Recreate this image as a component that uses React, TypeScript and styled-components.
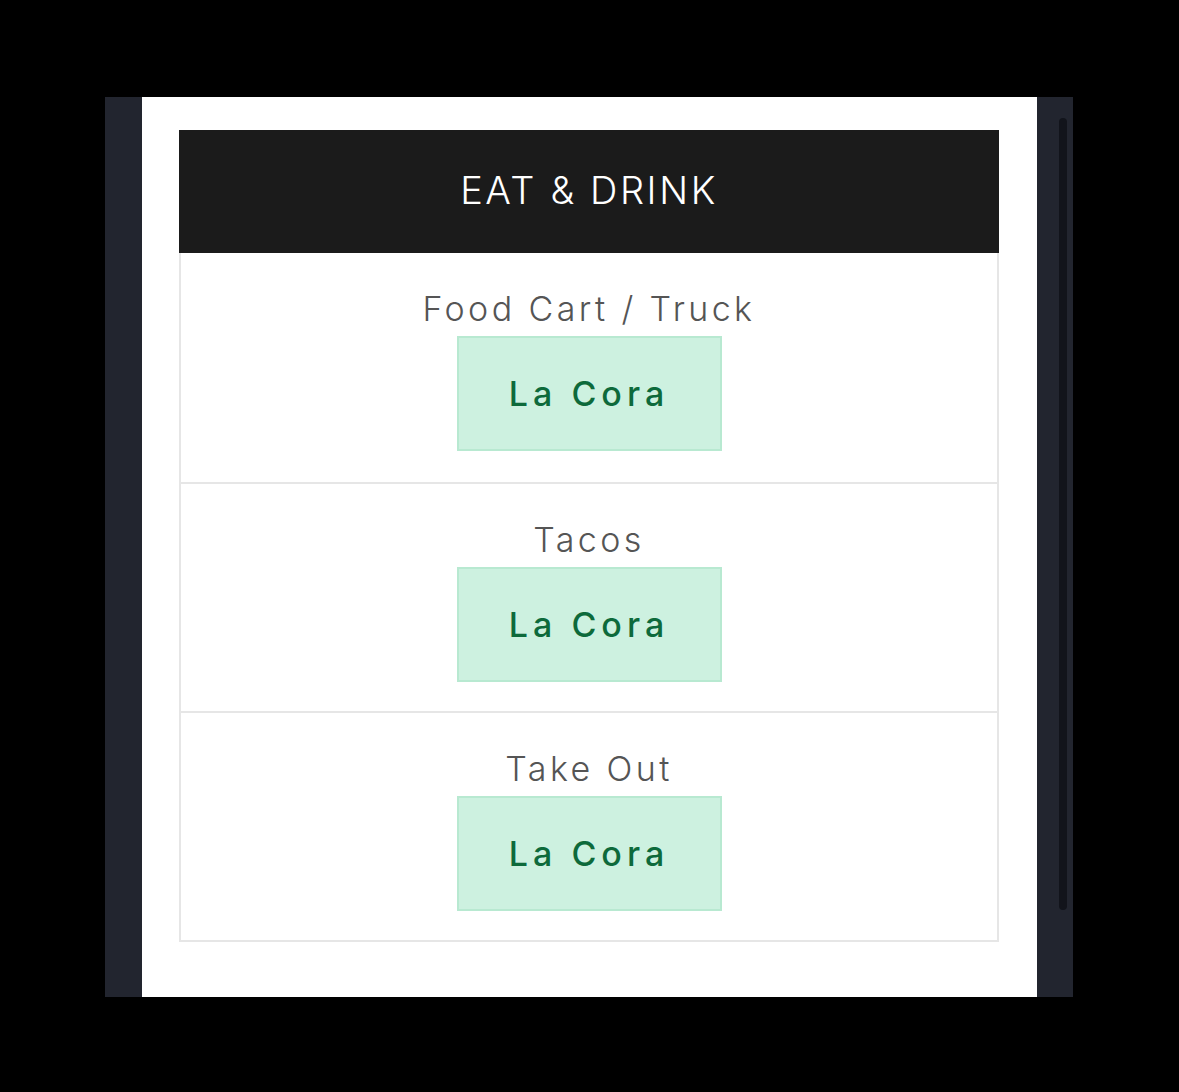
import styled, { createGlobalStyle } from 'styled-components'

const GlobalStyle = createGlobalStyle`
  html, body {
    margin: 0;
    padding: 0;
    background: #000;
  }
  body {
    font-family: Inter, "Noto Sans", sans-serif;
  }
`

const Page = styled.div`
  width: 1179px;
  height: 1092px;
  padding-top: 97px;
  padding-left: 105px;
  box-sizing: border-box;
`

const Frame = styled.div`
  width: 968px;
  height: 900px;
  background: #22252f;
  display: flex;
  padding-left: 37px;
  box-sizing: border-box;
`

const Sheet = styled.main`
  width: 895px;
  height: 100%;
  background: #fff;
  padding: 33px 38px 0 37px;
  box-sizing: border-box;
`

const Gutter = styled.div`
  flex: 1;
  display: flex;
  justify-content: center;
  padding: 21px 0 0 16px;
`

const Thumb = styled.div`
  width: 8px;
  height: 792px;
  border-radius: 4px;
  background: #12141b;
`

const Header = styled.header`
  height: 123px;
  background: #1b1b1b;
  color: #fff;
  display: flex;
  align-items: center;
  justify-content: center;

  h1 {
    margin: 0 0 4px;
    font-weight: 300;
    font-size: 38px;
    letter-spacing: 2.6px;
  }
`

const List = styled.ul`
  list-style: none;
  margin: 0;
  padding: 0;
  border: 2px solid #e6e6e6;
  border-top: none;
`

const Row = styled.li`
  height: 229px;
  box-sizing: border-box;
  padding-top: 36px;
  display: flex;
  flex-direction: column;
  align-items: center;

  & + & {
    border-top: 2px solid #e6e6e6;
  }
`

const Category = styled.h2`
  margin: 0;
  font-size: 34px;
  line-height: 40px;
  font-weight: 300;
  color: #555;
  letter-spacing: 3.4px;
`

const Place = styled.a`
  margin-top: 7px;
  width: 265px;
  height: 115px;
  box-sizing: border-box;
  background: #cdf1e0;
  border: 2px solid #b8e9d1;
  display: flex;
  align-items: center;
  justify-content: center;
  color: #0d6a3b;
  font-size: 34px;
  font-weight: 500;
  letter-spacing: 5px;
  text-decoration: none;
`

const categories = ['Food Cart / Truck', 'Tacos', 'Take Out']

export default function App() {
  return (
    <>
      <GlobalStyle />
      <Page>
        <Frame>
          <Sheet>
            <Header>
              <h1>EAT &amp; DRINK</h1>
            </Header>
            <List>
              {categories.map((c) => (
                <Row key={c}>
                  <Category>{c}</Category>
                  <Place href="#">La Cora</Place>
                </Row>
              ))}
            </List>
          </Sheet>
          <Gutter>
            <Thumb />
          </Gutter>
        </Frame>
      </Page>
    </>
  )
}
